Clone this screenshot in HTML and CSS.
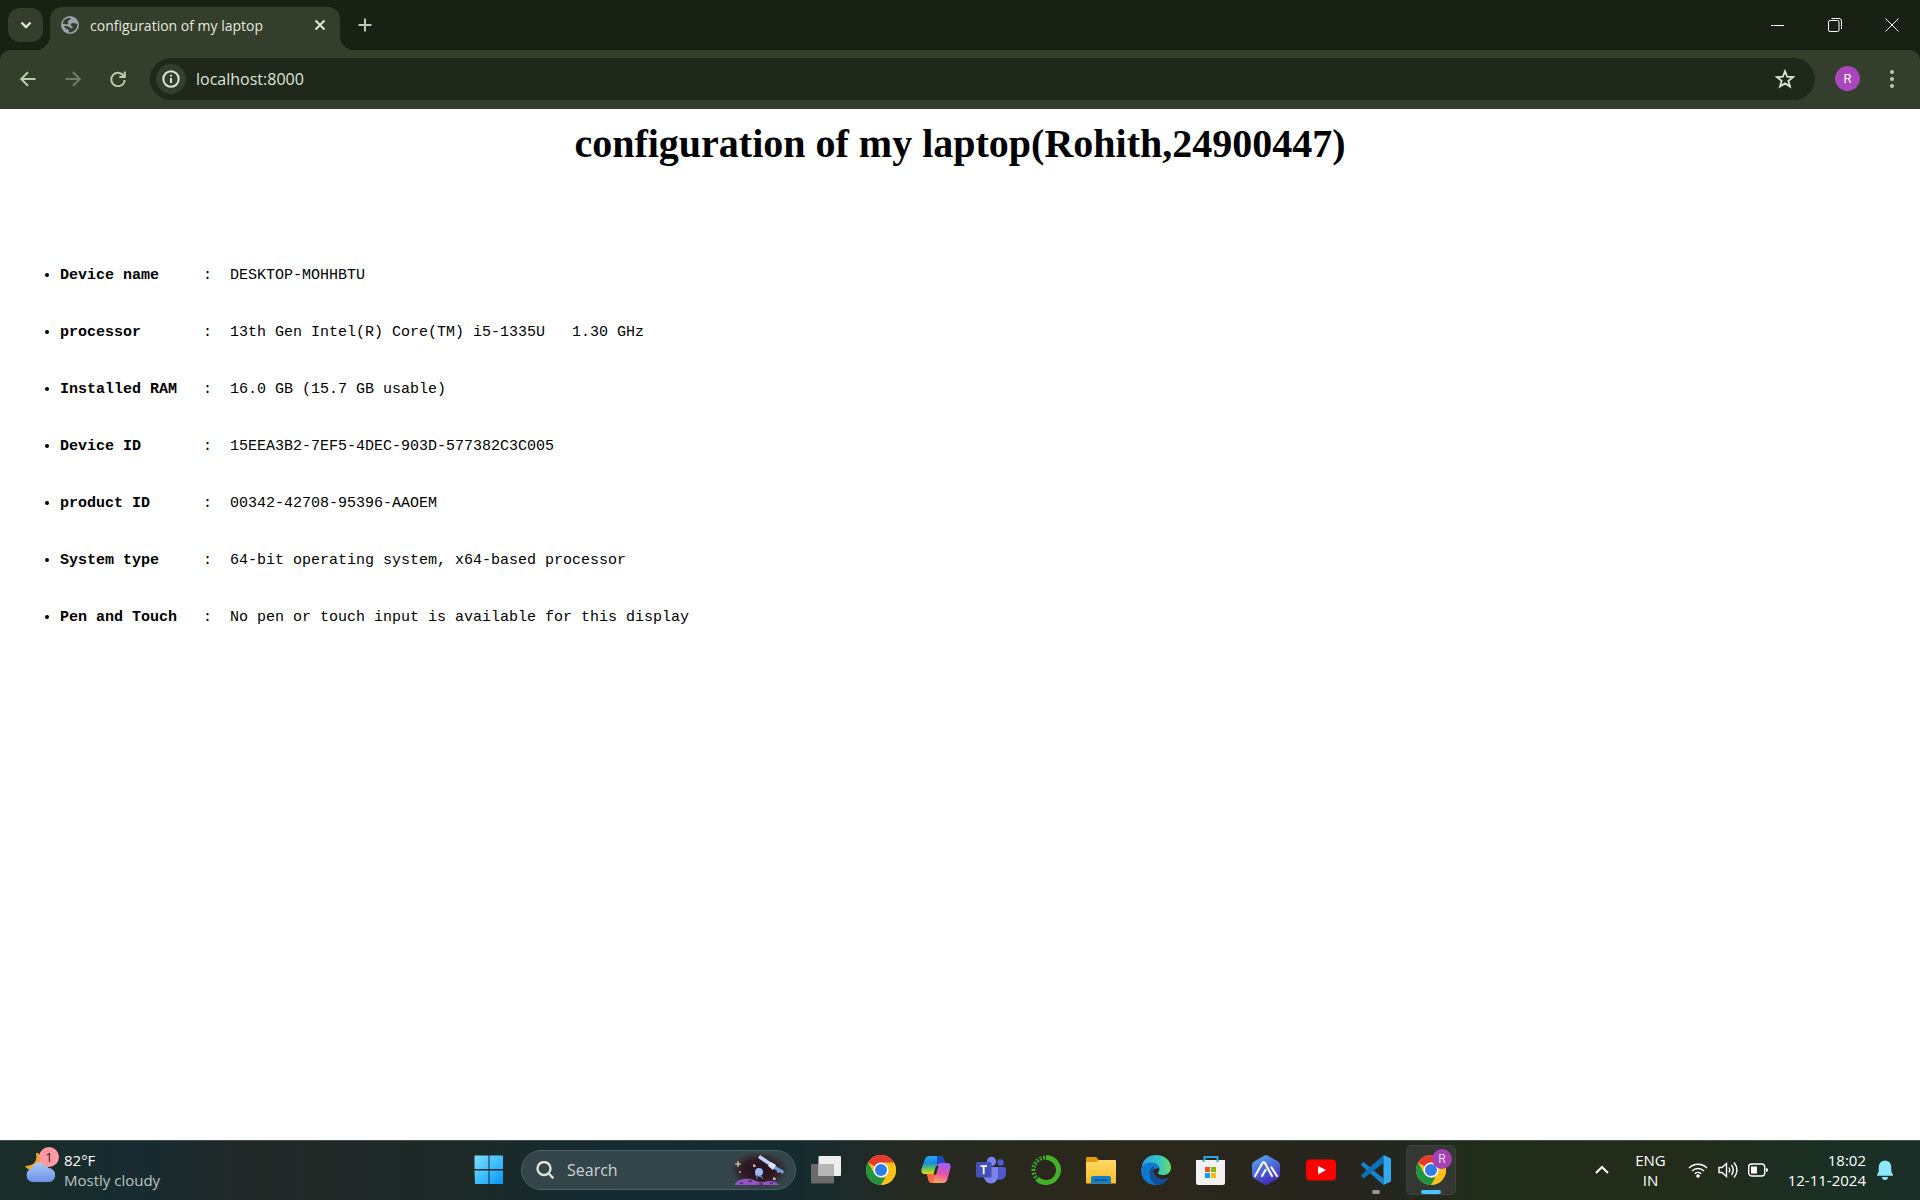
FILE: index.html
```html
<!DOCTYPE html>
<html lang="en">
<head>
<meta charset="utf-8">
<title>configuration of my laptop</title>
<link rel="stylesheet" href="styles.css">
</head>
<body>
<div class="desktop">
  <header class="tabstrip">
    <button class="tab-search" aria-label="Search tabs"><svg width="12" height="8" viewBox="0 0 12 8"><path d="M1.500 1.500 6 6l4.500-4.500" class="line light thick"/></svg></button>
    <div class="tab">
      <svg width="18" height="18" viewBox="0 0 18 18"><circle cx="9" cy="9" r="9" fill="#9aa0a9"/><path d="M10 2c-1 2-2 2-3 3s1 2 0 3-4 0-5 0C2 4 5 1.500 10 2zM12 7c2 0 3 1 4.500 1-.1 4-3 8-8 8.500-1-1-.5-2-1.500-3s-3-1-4-3c2-1 3.500 0 5 .5s1.500 1.500 3 1.500c1.500-.5.5-2-.5-2.500S9 7.500 12 7z" fill="#343e2d"/></svg>
      <span class="tab-title">configuration of my laptop</span>
      <button class="icon-btn tab-close" aria-label="Close tab"><svg width="12" height="12" viewBox="0 0 12 12"><path d="m1.500 1.500 9 9m0-9-9 9" class="line light"/></svg></button>
    </div>
    <button class="icon-btn new-tab" aria-label="New tab"><svg width="14" height="14" viewBox="0 0 14 14"><path d="M7 .5v13M.5 7h13" class="line sage"/></svg></button>
    <div class="window-controls">
      <button aria-label="Minimize"><svg width="14" height="14" viewBox="0 0 14 14"><path d="M0 7.500h13" class="line white thin"/></svg></button>
      <button aria-label="Restore"><svg width="14" height="14" viewBox="0 0 14 14"><path d="M3.500.5H11A2.500 2.500 0 0 1 13.500 3v8" class="line white thin"/><rect x=".5" y="2.500" width="10.500" height="11" rx="1.500" class="line white thin"/></svg></button>
      <button aria-label="Close"><svg width="14" height="14" viewBox="0 0 14 14"><path d="m.5.5 13 13m0-13-13 13" class="line white thin"/></svg></button>
    </div>
  </header>

  <nav class="toolbar">
    <button class="icon-btn nav-btn" aria-label="Back"><svg width="16" height="16" viewBox="0 0 16 16"><path d="M15.500 8H1.500M8 1.200 1.200 8 8 14.800" class="line sage"/></svg></button>
    <button class="icon-btn nav-btn" aria-label="Forward" disabled><svg width="16" height="16" viewBox="0 0 16 16"><path d="M.5 8h14M8 1.200 14.800 8 8 14.800" class="line faded"/></svg></button>
    <button class="icon-btn nav-btn" aria-label="Reload"><svg width="16" height="16" viewBox="0 0 16 16"><path d="M14 5.500A6.700 6.700 0 1 0 14.700 9M14.800.5V6H9.300" class="line sage"/></svg></button>
    <div class="omnibox">
      <button class="site-info" aria-label="View site information"><svg width="18" height="18" viewBox="0 0 18 18"><circle cx="9" cy="9" r="7.700" class="line light"/><path d="M9 8v5M9 4.800v1.800" class="line light"/></svg></button>
      <input class="address" type="text" aria-label="Address" value="localhost:8000">
      <button class="icon-btn" aria-label="Bookmark this tab"><svg width="20" height="20" viewBox="0 0 20 20"><path d="m10 2.200 2.100 5.500 6 .4-4.700 3.700 1.600 5.800L10 14.400l-5 3.200 1.600-5.800L1.900 8.100l6-.4z" class="line light star"/></svg></button>
    </div>
    <button class="avatar" aria-label="Profile">R</button>
    <button class="icon-btn menu-btn" aria-label="Menu"><svg width="4" height="18" viewBox="0 0 4 18"><g fill="#b9cbae"><circle cx="2" cy="2" r="2"/><circle cx="2" cy="9" r="2"/><circle cx="2" cy="16" r="2"/></g></svg></button>
  </nav>

  <main class="page">
    <h1>configuration of my laptop(Rohith,24900447)</h1>
    <ul class="specs">
      <li><b>Device name</b><i>:</i>DESKTOP-MOHHBTU</li>
      <li><b>processor</b><i>:</i>13th Gen Intel(R) Core(TM) i5-1335U   1.30 GHz</li>
      <li><b>Installed RAM</b><i>:</i>16.0 GB (15.7 GB usable)</li>
      <li><b>Device ID</b><i>:</i>15EEA3B2-7EF5-4DEC-903D-577382C3C005</li>
      <li><b>product ID</b><i>:</i>00342-42708-95396-AAOEM</li>
      <li><b>System type</b><i>:</i>64-bit operating system, x64-based processor</li>
      <li><b>Pen and Touch</b><i>:</i>No pen or touch input is available for this display</li>
    </ul>
  </main>

  <footer class="taskbar">
    <button class="weather">
      <span class="weather-icon">
        <svg width="30" height="32" viewBox="0 0 30 32"><defs><linearGradient id="cloud" x2="0" y2="1"><stop stop-color="#a9c8f8"/><stop offset="1" stop-color="#6a93e6"/></linearGradient></defs><path d="M11 2c2 9-3 13-11 13 3 5 10 6 15 2s3-11-2-15z" fill="#f5a623"/><path d="M7 31a7 7 0 0 1-.5-13.500 9 9 0 0 1 17-.5A7 7 0 0 1 23 31z" fill="url(#cloud)"/></svg>
        <span class="badge">1</span>
      </span>
      <span class="weather-text"><span>82°F</span><span class="muted">Mostly cloudy</span></span>
    </button>

    <div class="apps">
      <button class="app" aria-label="Start"><svg width="30" height="30" viewBox="0 0 30 30"><defs><linearGradient id="win" x2="1" y2="1"><stop stop-color="#7fdcff"/><stop offset=".5" stop-color="#3fc0fb"/><stop offset="1" stop-color="#0a93f8"/></linearGradient></defs><path d="M1 .5h13.500V14H.5V1zM15.500.5h13L29 1v13H15.500zM.5 15.500h14V29H1zM15.500 15.500H29V29H15.500z" fill="url(#win)"/></svg></button>
      <label class="search">
        <svg width="18" height="18" viewBox="0 0 18 18"><circle cx="8" cy="7.500" r="6.500" class="line light thick"/><path d="m12.800 12.500 4.500 4.800" class="line light thick"/></svg>
        <input type="search" placeholder="Search" aria-label="Search">
        <svg width="56" height="34" viewBox="0 0 56 34"><defs><radialGradient id="sky"><stop stop-color="#1c1026"/><stop offset=".55" stop-color="#301820"/><stop offset="1" stop-color="#301820" stop-opacity="0"/></radialGradient></defs><ellipse cx="28" cy="17" rx="29" ry="18" fill="url(#sky)"/><path d="M4 32c0-4 8-7 15-6 6 1 7 4 14 3 7-2 12-1 15 3z" fill="#9355c4"/><path d="M9 30h3m5-2h4m7 3h4m7-1h3" stroke="#63318f" stroke-width="2"/><path d="m29 2-2 3 12 8 2-3z" fill="#bcd2f7"/><path d="m43 12-2 3 11 6 1-3z" fill="#739edf"/><path d="m40 9-3 4 5 4 3-5z" fill="#dbe5fb"/><circle cx="28" cy="19" r="4" fill="#9eb8ef"/><path d="m24 22 7 2M26 23v3m4-3 2 3" stroke="#708fcd"/><path d="M7 8v6m-3-3h6M23 11v3m-1-1h3M9 18v2m34 4v3m-1-1h3M46 19h2" stroke="#ffe4c0"/></svg>
      </label>
      <button class="app" aria-label="Task view"><svg width="30" height="30" viewBox="0 0 30 30"><rect x="0" y="9" width="23" height="19.500" rx="1" fill="#6b6b6b"/><rect x="7.500" y="1" width="22.500" height="20" rx="1" fill="#eee"/><path d="M7.500 9H23v12H7.500z" fill="#b6b6b6"/></svg></button>
      <button class="app" aria-label="Google Chrome"><svg width="30" height="30" viewBox="0 0 30 30"><use href="#chrome"/></svg></button>
      <button class="app" aria-label="Copilot"><svg width="30" height="30" viewBox="0 0 30 30"><defs><linearGradient id="cp1" x2="0" y2="1"><stop stop-color="#22a6f2"/><stop offset=".4" stop-color="#178cdc"/><stop offset=".7" stop-color="#5fc65a"/><stop offset="1" stop-color="#f4d21c"/></linearGradient><linearGradient id="cp2" x1=".6" x2=".3" y2="1"><stop stop-color="#a05cf6"/><stop offset=".5" stop-color="#e653a5"/><stop offset="1" stop-color="#ffae58"/></linearGradient></defs><path d="M8 1h11c2 0 3 1 3.500 3L24 8h-4c-2 0-3 1-3.500 3L14 19H4c-3 0-4-2-3.500-5l3-9C4.500 2.500 6 1 8 1z" fill="url(#cp1)"/><path d="M16 1h3c2 0 3 1 3.500 3L24 8h-4c-2 0-3 1-4 3z" fill="#1c48c7"/><path d="M22 28H11c-2 0-3-1-3.500-3L6 19h5c2 0 3-1 3.500-3L17 10c.5-1.500 1.500-2 3-2h6c3 0 4 2 3.500 5l-3 11c-.7 2.500-2 4-4.500 4z" fill="url(#cp2)"/><path d="M6 19h6c1.500 0 2.500-1 3-2l-3 11h-1c-2 0-3-1-3.500-3z" fill="#f46c3a"/><path d="m15 11-2.500 8 2.500 1 2.500-9z" fill="#28291f"/></svg></button>
      <button class="app" aria-label="Microsoft Teams"><svg width="30" height="30" viewBox="0 0 30 30"><circle cx="24.500" cy="7.500" r="3.200" fill="#5059c9"/><path d="M19 12h9c1 0 2 .8 2 2v5a6 6 0 0 1-9 5z" fill="#5059c9"/><circle cx="15.500" cy="6.500" r="4.700" fill="#7b83eb"/><path d="M8 12h14v10a7 6.500 0 0 1-14 0z" fill="#7b83eb"/><rect x="0" y="7" width="15.500" height="15.500" rx="1.500" fill="#4350b5"/><path d="M4.500 11.200h6.500M7.700 11v8.200" stroke="#fff" stroke-width="1.800"/></svg></button>
      <button class="app" aria-label="Anaconda"><svg width="30" height="30" viewBox="0 0 30 30"><path d="M15 2.500A12.500 12.500 0 1 1 6 23.700" fill="none" stroke="#43b02a" stroke-width="5"/><path d="M14 2.500A12.500 12.500 0 0 0 6 23.700" fill="none" stroke="#43b02a" stroke-width="4" stroke-dasharray="2 1.500"/><path d="M10 3A12.500 12.500 0 0 0 6 24" fill="none" stroke="#26291f" stroke-width="1" stroke-dasharray="2 2"/></svg></button>
      <button class="app" aria-label="File Explorer"><svg width="30" height="30" viewBox="0 0 30 30"><defs><linearGradient id="fold" x2="0" y2="1"><stop stop-color="#ffd968"/><stop offset="1" stop-color="#fdbb20"/></linearGradient></defs><path d="M0 3.500C0 2.500.7 2 1.500 2H10l3 3h15.500c1 0 1.500.7 1.500 1.500V12H0z" fill="#e19b08"/><path d="M0 7h10l3-2h15.500c1 0 1.500.7 1.500 1.500v22H0z" fill="url(#fold)"/><path d="M5 28.500V23a2 2 0 0 1 2-2h16a2 2 0 0 1 2 2v5.500z" fill="#117fce"/><path d="M8.500 25h13" stroke="#08508f" stroke-width="1.500"/></svg></button>
      <button class="app" aria-label="Microsoft Edge"><svg width="30" height="30" viewBox="0 0 30 30"><defs><linearGradient id="edge"><stop stop-color="#2aa7e3"/><stop offset=".6" stop-color="#35c6c2"/><stop offset="1" stop-color="#68dc5c"/></linearGradient></defs><path d="M1 10C3 4 8 0 15 0c9 0 15 6 15 12.500 0 5-4 7.500-8 7.500-3 0-5-1-5-2s1.500-1.500 1.500-4C18.500 11 15 8 11 8S3 10 1 13z" fill="url(#edge)"/><path d="M0 15C0 10 5 7.500 10 7.500c5 0 8.500 3 8.500 6-5-1-9 3-8 8 1 4 4 7 8 8C8 32 0 25 0 15z" fill="#0f78cf"/><path d="M8.500 18c0-4 3-6.500 5-7-2 4-1 12 7 13 3 .5 5-.5 7-1.500-2 5-7 7.500-11 7.500-5-1-8-6-8-12z" fill="#124f96"/></svg></button>
      <button class="app" aria-label="Microsoft Store"><svg width="30" height="30" viewBox="0 0 30 30"><path d="M8.500 6V2h13v4" fill="none" stroke="#28a9e3" stroke-width="2"/><path d="M0 5h29v22.500a2.500 2.500 0 0 1-2.500 2.500h-24A2.500 2.500 0 0 1 0 27.500z" fill="#f2f2f2"/><path d="M7.500 5v2m14-2v2" stroke="#28a9e3" stroke-width="2"/><path d="M9 12h5v5H9z" fill="#f25022"/><path d="M15 12h5v5h-5z" fill="#7fba00"/><path d="M9 18h5v5H9z" fill="#00a4ef"/><path d="M15 18h5v5h-5z" fill="#ffb900"/></svg></button>
      <button class="app" aria-label="Mountain app"><svg width="30" height="30" viewBox="0 0 30 30"><defs><linearGradient id="hex" x1=".2" x2=".6" y2="1"><stop stop-color="#55a4f0"/><stop offset="1" stop-color="#4328bc"/></linearGradient></defs><path d="M13 .7q2-1.200 4 0l10 5.800q2 1.200 2 3.500v10q0 2.300-2 3.500l-10 5.800q-2 1.200-4 0L3 23.500Q1 22.300 1 20V10q0-2.300 2-3.500z" fill="url(#hex)"/><path d="m4 21 7.500-13q1.200-2 2.400 0L21 21M11 21l3.500-6M20.500 12.500 26 21" fill="none" stroke="#f5f5ff" stroke-width="2.200" stroke-linecap="round"/></svg></button>
      <button class="app" aria-label="YouTube"><svg width="30" height="30" viewBox="0 0 30 30"><rect y="4.500" width="30" height="21" rx="4" fill="#f00"/><path d="m12 11 8 4-8 4.500z" fill="#fff"/></svg></button>
      <button class="app running" aria-label="Visual Studio Code"><svg width="30" height="30" viewBox="0 0 30 30"><path d="m2.500 7 20 16.500V30L.5 10.500q-.7-1 0-1.700z" fill="#1684cf"/><path d="M2.500 23.500.7 21.500q-.7-1 0-1.700L22.500 0v8z" fill="#0c72bb"/><path d="M22.500 0 30 3.500v23L22.500 30z" fill="#35a9f0"/></svg></button>
      <button class="app running active" aria-label="Google Chrome, profile R"><svg width="30" height="30" viewBox="0 0 30 30"><g id="chrome"><circle cx="15" cy="15" r="15" fill="#fcc21b"/><path d="M15 15 2 7.500A15 15 0 0 1 28 7.500z" fill="#e33b2e"/><path d="M2 7.500 8.500 18.800 15 22.500h6L15 30A15 15 0 0 1 2 7.500z" fill="#229342"/><path d="M21.500 18.800 15 30a15 15 0 0 0 13-22.500H15z" fill="#fcc21b"/><circle cx="15" cy="15" r="7.500" fill="#fff"/><circle cx="15" cy="15" r="6" fill="#2f7de9"/></g></svg><span class="profile-badge">R</span></button>
    </div>

    <div class="tray">
      <button aria-label="Show hidden icons"><svg width="14" height="10" viewBox="0 0 14 10"><path d="m1 8 6-6 6 6" class="line white"/></svg></button>
      <button class="language"><span>ENG</span><span>IN</span></button>
      <button class="status" aria-label="Network, volume, battery">
        <svg width="20" height="16" viewBox="0 0 20 16"><path d="M1 6a12.700 12.700 0 0 1 18 0M4 9a8.500 8.500 0 0 1 12 0M6.800 11.800a4.600 4.600 0 0 1 6.400 0" class="line white mid"/><circle cx="10" cy="14" r="1.800" fill="#fff"/></svg>
        <svg width="20" height="18" viewBox="0 0 20 18"><path d="M1 6.500h3L8.500 2.500v13L4 11.500H1zM11 6.500q1.500 2.500 0 5M13.500 4q3.500 5 0 10M16 1.500q6 7.500 0 15" class="line white mid"/></svg>
        <svg width="20" height="14" viewBox="0 0 20 14"><rect x=".7" y="1" width="16" height="12" rx="3" class="line white mid"/><path d="M3 3.500h6v7H3z" fill="#fff"/><path d="M18 5q2 0 2 2t-2 2z" fill="#fff"/></svg>
      </button>
      <button class="clock"><span>18:02</span><span>12-11-2024</span></button>
      <button aria-label="Notifications"><svg width="16" height="20" viewBox="0 0 16 20"><path d="M8 .5a6.300 6.300 0 0 0-6.300 6.300v4.700L0 15v.8h16V15l-1.700-3.500V6.800A6.300 6.300 0 0 0 8 .5zM5 17a3 3 0 0 0 6 0z" fill="#8ee6fd"/></svg></button>
    </div>
  </footer>
</div>
</body>
</html>
```
FILE: styles.css
```css
* { box-sizing: border-box; }

body {
  margin: 0;
  background: #fff;
  font-family: "Open Sans", "Noto Sans", sans-serif;
}

button {
  padding: 0;
  border: 0;
  background: none;
  color: inherit;
  font: inherit;
}

input {
  min-width: 0;
  padding: 0;
  border: 0;
  outline: 0;
  background: none;
  font: inherit;
}

svg { display: block; flex: none; }

.desktop {
  display: flex;
  flex-direction: column;
  min-height: 100vh;
  background: #182214;
}

/* icon strokes */
.line { fill: none; stroke-width: 2; }
.thick { stroke-width: 2.4; }
.mid { stroke-width: 1.4; }
.thin { stroke-width: 1; }
.star { stroke-width: 1.8; }
.light { stroke: #dfe4d8; }
.white { stroke: #fff; }
.sage { stroke: #b9cbae; }
.faded { stroke: #6f7a68; }

.icon-btn {
  display: grid;
  place-items: center;
  width: 30px;
  height: 30px;
}

/* tab strip */
.tabstrip {
  display: flex;
  align-items: flex-end;
  height: 50px;
  padding-left: 8px;
}

.tab-search {
  display: grid;
  place-items: center;
  width: 35px;
  height: 34px;
  margin: 0 7px 8px 0;
  border-radius: 12px;
  background: #343e2d;
}

.tab {
  position: relative;
  display: flex;
  align-items: center;
  gap: 11px;
  width: 290px;
  height: 43px;
  padding: 0 5px 7px 11px;
  border-radius: 12px 12px 0 0;
  background: #343e2d;
  color: #e3e8dc;
  font-size: 14px;
}

.tab::before,
.tab::after {
  content: "";
  position: absolute;
  bottom: 0;
  width: 14px;
  height: 14px;
}

.tab::before {
  right: 100%;
  background: radial-gradient(circle at 0 0, transparent 14px, #343e2d 14px);
}

.tab::after {
  left: 100%;
  background: radial-gradient(circle at 100% 0, transparent 14px, #343e2d 14px);
}

.tab-title { flex: 1; white-space: nowrap; }

.new-tab { margin: 0 0 10px 10px; }

.window-controls {
  display: flex;
  margin-left: auto;
}

.window-controls button {
  display: grid;
  place-items: center;
  width: 57px;
  height: 50px;
}

/* toolbar */
.toolbar {
  display: flex;
  align-items: center;
  height: 59px;
  padding: 0 13px 2px;
  border-radius: 10px 10px 0 0;
  background: #343e2d;
}

.nav-btn { margin-right: 15px; }

.omnibox {
  display: flex;
  flex: 1;
  align-items: center;
  gap: 10px;
  height: 42px;
  margin-left: 2px;
  padding: 0 15px 0 6px;
  border-radius: 21px;
  background: #1f281b;
}

.site-info {
  display: grid;
  place-items: center;
  width: 30px;
  height: 30px;
  border-radius: 50%;
  background: #343e2d;
}

.address {
  flex: 1;
  color: #dfe4d8;
  font-size: 16px;
}

.avatar {
  width: 25px;
  height: 25px;
  margin: 0 17px 0 20px;
  border-radius: 50%;
  background: #ab47bc;
  color: #fff;
  font-family: Roboto, sans-serif;
  font-size: 13px;
}

/* page */
.page {
  flex: 1;
  padding: 12px 10px;
  background: #fff;
  color: #000;
}

.page h1 {
  margin: 0;
  font: bold 40px/46px "Liberation Serif", serif;
  text-align: center;
}

.specs {
  margin: 80px 0 0;
  padding-left: 50px;
  font: 15px/57px "Liberation Mono", monospace;
}

.specs li { white-space: pre-wrap; }

.specs b,
.specs i {
  display: inline-block;
  font-style: normal;
}

.specs b { width: 143px; }
.specs i { width: 27px; }

/* taskbar */
.taskbar {
  display: grid;
  grid-template-columns: 1fr auto 1fr;
  align-items: center;
  height: 60px;
  box-shadow: inset 0 1px #42504b;
  background: linear-gradient(90deg, #1a2d27, #172b31 7%, #232827 13%, #1d2a27 24%, #162a31 31%, #152b30 41%, #252a22 47%, #2c271b 58%, #25261f 72%, #202d1a 78%, #232c1a 88%, #1a2f24 95%, #1a2f28);
  color: #fff;
  font-size: 15px;
  line-height: 20px;
}

.weather {
  display: flex;
  align-items: center;
  gap: 9px;
  padding-left: 25px;
  text-align: left;
}

.weather-icon { position: relative; padding-bottom: 6px; }

.badge {
  position: absolute;
  top: -4px;
  left: 14px;
  width: 20px;
  height: 20px;
  border-radius: 50%;
  background: #ff99a4;
  color: #222;
  font-size: 13px;
  text-align: center;
}

.weather-text,
.language,
.clock {
  display: flex;
  flex-direction: column;
}

.muted { color: #bcc3c2; }

.apps { display: flex; align-items: center; gap: 5px; }

.app {
  position: relative;
  display: grid;
  place-items: center;
  width: 50px;
  height: 50px;
  border-radius: 5px;
}

.search {
  display: flex;
  align-items: center;
  gap: 13px;
  width: 275px;
  height: 40px;
  margin-left: 2px;
  padding: 0 8px 0 14px;
  border: 1px solid #4c5c60;
  border-radius: 20px;
  background: #34454a;
}

.search input {
  flex: 1;
  color: #fff;
  font-size: 16px;
}

.search input::placeholder { color: #cdd2d3; opacity: 1; }

.running::after {
  content: "";
  position: absolute;
  bottom: 1px;
  left: 50%;
  width: 8px;
  height: 4px;
  border-radius: 2px;
  background: #9a9a98;
  transform: translateX(-50%);
}

.active {
  border: 1px solid #40443f;
  background: #343832;
}

.active::after {
  bottom: 0;
  width: 20px;
  background: #4cc2ff;
}

.profile-badge {
  position: absolute;
  top: 3px;
  right: 3px;
  width: 20px;
  height: 20px;
  border-radius: 50%;
  background: #a541b5;
  color: #f0d8f4;
  font: 12px/20px Roboto, sans-serif;
  text-align: center;
}

.tray {
  display: flex;
  align-items: center;
  justify-content: flex-end;
  padding-right: 27px;
}

.language {
  align-items: center;
  margin: 0 22px 0 26px;
}

.status {
  display: flex;
  align-items: center;
  gap: 10px;
}

.clock {
  align-items: flex-end;
  margin: 0 11px 0 20px;
}
```
